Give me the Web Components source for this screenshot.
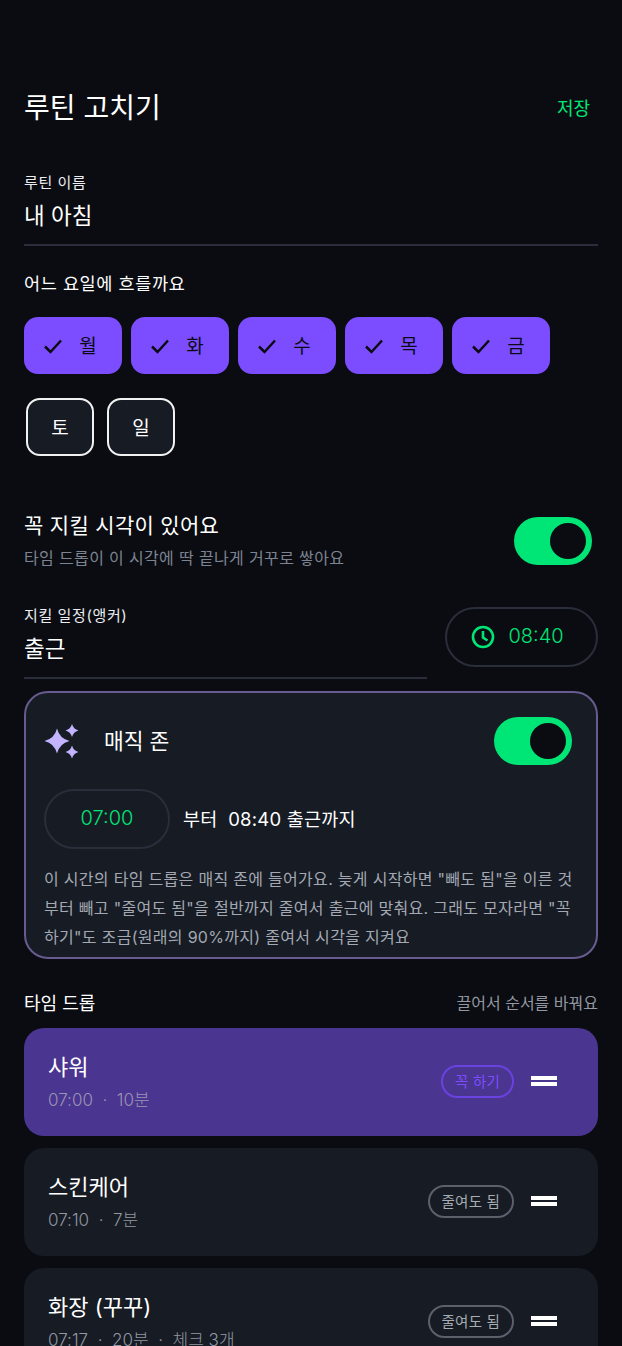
<!DOCTYPE html>
<html lang="ko">
<head>
<meta charset="utf-8">
<title>루틴 고치기</title>
<style>
html, body {
    margin: 0;
    height: 1346px;
    overflow: hidden;
    background: #0a0c11;
    color: #fff;
    font-family: Inter, "Noto Sans CJK KR", "Noto Sans", sans-serif;
}
</style>
</head>
<body>
<routine-page></routine-page>

<script>
const GREEN = "#00e676";

class PageHeader extends HTMLElement {
    constructor() {
        super();
        this.shadow = this.attachShadow({mode: "open"});
    }
    connectedCallback() {
        this.shadow.innerHTML = `
<style>
:host { display: flex; justify-content: space-between; align-items: center; height: 40px; padding-right: 8px; }
.title { font-size: 28px; line-height: 40px; padding-top: 1px; }
.save { font-size: 18px; color: ${GREEN}; }
</style>
<span class="title">${this.getAttribute("title")}</span>
<span class="save">${this.getAttribute("action")}</span>`;
    }
}
customElements.define("page-header", PageHeader);

class TextField extends HTMLElement {
    constructor() {
        super();
        this.shadow = this.attachShadow({mode: "open"});
    }
    connectedCallback() {
        this.shadow.innerHTML = `
<style>
:host { display: block; border-bottom: 2px solid #2a2e3a; height: 72px; }
.label { font-size: 15px; letter-spacing: .6px; line-height: 20px; padding-top: 1px; color: #eceef2; }
.value { font-size: 22.5px; line-height: 32px; margin-top: 7px; }
</style>
<div class="label">${this.getAttribute("label")}</div>
<div class="value">${this.getAttribute("value")}</div>`;
    }
}
customElements.define("text-field", TextField);

class DayChip extends HTMLElement {
    constructor() {
        super();
        this.shadow = this.attachShadow({mode: "open"});
    }
    connectedCallback() {
        let on = this.hasAttribute("on");
        let check = on ? `<svg width="20" height="20" viewBox="0 0 20 20"><path d="M2 10.5 7.5 16 18 4.5" fill="none" stroke="#0a0c11" stroke-width="2.5"/></svg>` : "";
        this.shadow.innerHTML = `
<style>
:host { display: block; }
.chip {
    box-sizing: border-box;
    display: flex;
    align-items: center;
    justify-content: center;
    gap: 16px;
    height: 57px;
    border-radius: 14px;
    font-size: 19px;
}
.chip span { padding-bottom: 2px; }
.on { width: 98px; padding-right: 6px; background: #7c4dff; color: #0a0c11; }
.off { width: 68px; height: 58px; margin: 0 2px; background: #161b24; border: 2px solid #f2f2f2; color: #fff; }
</style>
<div class="chip ${on ? "on" : "off"}">${check}<span><slot></slot></span></div>`;
    }
}
customElements.define("day-chip", DayChip);

class ToggleSwitch extends HTMLElement {
    constructor() {
        super();
        this.shadow = this.attachShadow({mode: "open"});
    }
    connectedCallback() {
        this.shadow.innerHTML = `
<style>
:host { display: flex; justify-content: flex-end; align-items: center; box-sizing: border-box; width: 78px; height: 48px; padding-right: 6px; border-radius: 24px; background: ${GREEN}; flex: none; }
.thumb { width: 36px; height: 36px; border-radius: 50%; background: #0a0c11; }
</style>
<div class="thumb"></div>`;
    }
}
customElements.define("toggle-switch", ToggleSwitch);

class TimePill extends HTMLElement {
    constructor() {
        super();
        this.shadow = this.attachShadow({mode: "open"});
    }
    connectedCallback() {
        let clock = this.hasAttribute("clock");
        let icon = clock ? `<svg width="24" height="24" viewBox="0 0 24 24" fill="none" stroke="${GREEN}" stroke-width="2.6"><circle cx="12" cy="12" r="10"/><path d="M12 6V12.5L16.5 15.5"/></svg>` : "";
        this.shadow.innerHTML = `
<style>
:host { box-sizing: border-box; display: flex; align-items: center; justify-content: center; gap: 13px; height: 60px; ${clock ? "padding-right: 8px;" : ""} border: 2px solid #2a2e3a; border-radius: 30px; flex: none; color: ${GREEN}; font-size: 20px; font-weight: 300; letter-spacing: 0; }
span { padding-bottom: 2px; }
</style>
${icon}<span><slot></slot></span>`;
    }
}
customElements.define("time-pill", TimePill);

class MagicZone extends HTMLElement {
    constructor() {
        super();
        this.shadow = this.attachShadow({mode: "open"});
    }
    connectedCallback() {
        this.shadow.innerHTML = `
<style>
:host { box-sizing: border-box; display: block; height: 268px; padding: 24px 24px 0 18px; border: 2px solid #675b8f; border-radius: 24px; background: #161b24; }
.head { display: flex; align-items: center; height: 48px; }
.head svg { margin-right: 23px; flex: none; }
.name { flex: 1; font-size: 21.5px; padding-bottom: 3px; }
.range { display: flex; align-items: center; gap: 13px; margin-top: 24px; font-size: 18.5px; letter-spacing: .2px; }
.range > span { padding-bottom: 3px; }
time-pill { width: 126px; }
.desc { margin: 16px 0 0; font-size: 16px; letter-spacing: .3px; line-height: 29px; white-space: nowrap; color: #a3a8b2; }
</style>
<div class="head">
    <svg width="37" height="37" viewBox="0 0 37 37" fill="#c4b3ff">
        <path d="M13 5.5 Q15.5 15.5 25.5 18 Q15.5 20.5 13 30.5 Q10.5 20.5 .5 18 Q10.5 15.5 13 5.5Z"/>
        <path d="M28 1 Q29.4 6.1 34.5 7.5 Q29.4 8.9 28 14 Q26.6 8.9 21.5 7.5 Q26.6 6.1 28 1Z"/>
        <path d="M28 22.5 Q29.4 27.6 34.5 29 Q29.4 30.4 28 35.5 Q26.6 30.4 21.5 29 Q26.6 27.6 28 22.5Z"/>
    </svg>
    <span class="name">${this.getAttribute("title")}</span>
    <toggle-switch></toggle-switch>
</div>
<div class="range"><time-pill>${this.getAttribute("start")}</time-pill><span><slot name="range"></slot></span></div>
<p class="desc"><slot name="desc"></slot></p>`;
    }
}
customElements.define("magic-zone", MagicZone);

class DropCard extends HTMLElement {
    constructor() {
        super();
        this.shadow = this.attachShadow({mode: "open"});
    }
    connectedCallback() {
        let must = this.hasAttribute("must");
        this.shadow.innerHTML = `
<style>
:host { box-sizing: border-box; display: flex; align-items: center; height: 108px; flex: none; padding: 0 41px 0 24px; border-radius: 20px; background: ${must ? "#4a3590" : "#161b24"}; }
.text { flex: 1; min-width: 0; }
.name { font-size: 22px; line-height: 30px; }
.meta { margin-top: 6px; font-size: 17px; font-weight: 300; line-height: 24px; color: ${must ? "#9a94b4" : "#9297a1"}; white-space: pre; }
.badge { box-sizing: border-box; height: 33px; margin-bottom: 2px; padding: 0 12px; line-height: 29px; border: 2px solid ${must ? "#6a42e0" : "#5b606b"}; border-radius: 17px; font-size: 14.5px; letter-spacing: .2px; color: ${must ? "#7c4dff" : "#a7abb3"}; }
.handle { display: flex; flex-direction: column; gap: 2px; width: 26px; margin: 0 0 2px 17px; }
.handle i { display: block; height: 4px; background: #fff; }
</style>
<div class="text">
    <div class="name">${this.getAttribute("name")}</div>
    <div class="meta">${this.getAttribute("meta")}</div>
</div>
<span class="badge">${this.getAttribute("badge")}</span>
<div class="handle"><i></i><i></i></div>`;
    }
}
customElements.define("drop-card", DropCard);

class RoutinePage extends HTMLElement {
    constructor() {
        super();
        this.shadow = this.attachShadow({mode: "open"});
    }
    connectedCallback() {
        this.shadow.innerHTML = `
<style>
:host { display: block; box-sizing: border-box; height: 1346px; overflow: hidden; padding: 87px 24px 0; }
.days-title { margin-top: 26px; font-size: 17.5px; letter-spacing: .6px; line-height: 24px; }
.days { display: flex; flex-wrap: wrap; gap: 24px 9px; margin-top: 21px; }
.anchor-toggle { display: flex; justify-content: space-between; align-items: center; margin-top: 56px; padding-right: 6px; }
.anchor-title { font-size: 21px; letter-spacing: .3px; line-height: 28px; }
.anchor-sub { margin-top: 7px; font-size: 16px; letter-spacing: .35px; line-height: 22px; color: #7d8491; }
.anchor { display: flex; justify-content: space-between; margin-top: 36px; }
.anchor text-field { width: 403px; }
.anchor time-pill { width: 153px; margin-top: 2px; }
magic-zone { margin-top: 12px; }
.drops-head { display: flex; justify-content: space-between; align-items: center; margin-top: 29px; height: 28px; }
.drops-title { font-size: 18px; }
.drops-hint { font-size: 16px; color: #9297a1; }
.drops { display: flex; flex-direction: column; gap: 12px; margin-top: 12px; }
</style>
<page-header title="루틴 고치기" action="저장"></page-header>
<text-field label="루틴 이름" value="내 아침" style="margin-top:45px;"></text-field>
<div class="days-title">어느 요일에 흐를까요</div>
<div class="days">
    <day-chip on>월</day-chip><day-chip on>화</day-chip><day-chip on>수</day-chip><day-chip on>목</day-chip><day-chip on>금</day-chip>
    <day-chip>토</day-chip><day-chip>일</day-chip>
</div>
<div class="anchor-toggle">
    <div>
        <div class="anchor-title">꼭 지킬 시각이 있어요</div>
        <div class="anchor-sub">타임 드롭이 이 시각에 딱 끝나게 거꾸로 쌓아요</div>
    </div>
    <toggle-switch></toggle-switch>
</div>
<div class="anchor">
    <text-field label="지킬 일정(앵커)" value="출근"></text-field>
    <time-pill clock>08:40</time-pill>
</div>
<magic-zone title="매직 존" start="07:00">
    <span slot="range">부터 &nbsp;08:40 출근까지</span>
    <span slot="desc">이 시간의 타임 드롭은 매직 존에 들어가요. 늦게 시작하면 "빼도 됨"을 이른 것<br>부터 빼고 "줄여도 됨"을 절반까지 줄여서 출근에 맞춰요. 그래도 모자라면 "꼭<br>하기"도 조금(원래의 90%까지) 줄여서 시각을 지켜요</span>
</magic-zone>
<div class="drops-head"><span class="drops-title">타임 드롭</span><span class="drops-hint">끌어서 순서를 바꿔요</span></div>
<div class="drops">
    <drop-card must name="샤워" meta="07:00  ·  10분" badge="꼭 하기"></drop-card>
    <drop-card name="스킨케어" meta="07:10  ·  7분" badge="줄여도 됨"></drop-card>
    <drop-card name="화장 (꾸꾸)" meta="07:17  ·  20분  ·  체크 3개" badge="줄여도 됨"></drop-card>
</div>`;
    }
}
customElements.define("routine-page", RoutinePage);
</script>
</body>
</html>
